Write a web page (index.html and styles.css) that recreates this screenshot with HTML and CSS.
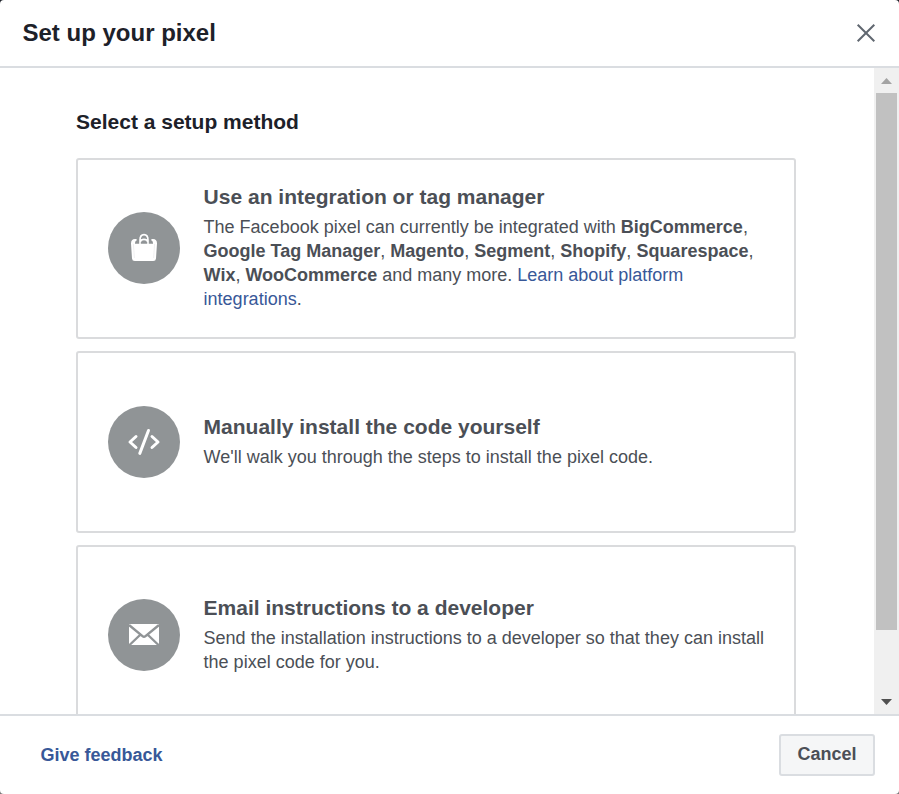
FILE: index.html
```
<!DOCTYPE html>
<html lang="en">
<head>
<meta charset="utf-8">
<title>Set up your pixel</title>
<link rel="stylesheet" href="styles.css">
</head>
<body>
<div class="dialog">
  <header class="header">
    <h1 class="title">Set up your pixel</h1>
    <button class="close" aria-label="Close"><svg width="20" height="20" viewBox="0 0 20 20"><path d="M1.7 1.7 18.3 18.3M18.3 1.7 1.7 18.3" fill="none" stroke="#606770" stroke-width="2"/></svg></button>
  </header>
  <div class="body">
    <main class="content">
      <h2 class="heading">Select a setup method</h2>
      <section class="card">
        <div class="icon"><svg width="72" height="72" viewBox="0 0 72 72"><path d="M23 31.5Q23 27 27 27H28.6V28.6Q26.9 29 26.9 31.8H31.2V28Q31.2 21.8 36 21.8T40.8 28V31.8H45.1Q45.1 29 43.4 28.6V27H45Q49 27 49 31.5L48 46.5Q47.8 49 45.2 49H26.8Q24.2 49 24 46.5Z" fill="#fff"/><path d="M32.8 27.2Q33.2 23.4 36 23.4T39.2 27.2Q36 25.6 32.8 27.2Z" fill="#909496"/><path d="M32.8 31.8V30.4Q33.4 28.2 36 28.2T39.2 30.4V31.8Z" fill="#909496"/><path d="M25.4 32 26.4 46M46.6 32 45.6 46" stroke="#e0e1e2" stroke-width=".5"/></svg></div>
        <div class="copy">
          <h3 class="name">Use an integration or tag manager</h3>
          <p class="text">The Facebook pixel can currently be integrated with <b>BigCommerce</b>,<br><b>Google Tag Manager</b>, <b>Magento</b>, <b>Segment</b>, <b>Shopify</b>, <b>Squarespace</b>,<br><b>Wix</b>, <b>WooCommerce</b> and many more. <a class="link">Learn about platform<br>integrations</a>.</p>
        </div>
      </section>
      <section class="card">
        <div class="icon"><svg width="72" height="72" viewBox="0 0 72 72" fill="none" stroke="#fff" stroke-width="3" stroke-linecap="round" stroke-linejoin="round"><path d="M28 30.5 22 36 28 41.5M44 30.5 50 36 44 41.5M40.5 24.5 31.8 47.4"/></svg></div>
        <div class="copy">
          <h3 class="name">Manually install the code yourself</h3>
          <p class="text">We'll walk you through the steps to install the pixel code.</p>
        </div>
      </section>
      <section class="card">
        <div class="icon"><svg width="72" height="72" viewBox="0 0 72 72"><path d="M21 25H51V46H21Z" fill="#fff"/><path d="M21 26 34.5 37.2Q36 38.5 37.5 37.2L51 26M21 46.5 32 36M51 46.5 40 36" stroke="#909496" stroke-width="2.4" fill="none"/></svg></div>
        <div class="copy">
          <h3 class="name">Email instructions to a developer</h3>
          <p class="text">Send the installation instructions to a developer so that they can install<br>the pixel code for you.</p>
        </div>
      </section>
    </main>
    <div class="scrollbar">
      <svg class="arrow" width="25" height="25"><path d="M7 16H18L12.5 10Z" fill="#a3a3a3"/></svg>
      <div class="thumb"></div>
      <svg class="arrow down" width="25" height="25"><path d="M7 10H18L12.5 16Z" fill="#505050"/></svg>
    </div>
  </div>
  <footer class="footer">
    <a class="feedback">Give feedback</a>
    <button class="cancel">Cancel</button>
  </footer>
</div>
</body>
</html>
```
FILE: styles.css
```
* { box-sizing: border-box; }
body { margin: 0; background: linear-gradient(#1d2129 50%, #777 50%); font-family: "Liberation Sans", Arial, sans-serif; color: #4b4f56; }
h1, h2, h3, p { margin: 0; }
.dialog { width: 899px; height: 794px; display: flex; flex-direction: column; overflow: hidden; border-radius: 4px; background: #fff; }
.header { height: 68px; flex: none; display: flex; align-items: center; justify-content: space-between; padding: 0 23px 0 22.5px; border-bottom: 2px solid #dadde1; }
.title { font-size: 24px; line-height: 28px; color: #1d2129; white-space: nowrap; }
.close { width: 20px; height: 20px; padding: 0; border: 0; background: none; }
.close svg { display: block; }
.body { height: 646px; flex: none; display: flex; overflow: hidden; }
.content { width: 874px; flex: none; padding: 39.6px 78px 0 76px; overflow: hidden; }
.heading { height: 50px; font-size: 21px; line-height: 28px; color: #1d2129; white-space: nowrap; }
.card { height: 181.6px; display: flex; align-items: center; margin-bottom: 12px; padding-left: 30px; border: 2px solid #dadbdd; border-radius: 3px; }
.icon { width: 72px; height: 72px; flex: none; margin-bottom: .6px; border-radius: 50%; background: #909496; }
.icon svg { display: block; }
.copy { margin-left: 23.6px; padding-bottom: 2.6px; white-space: nowrap; }
.name { font-size: 21px; line-height: 28px; height: 32px; }
.text { font-size: 18px; line-height: 24px; }
.link { color: #385898; }
.scrollbar { width: 25px; flex: none; display: flex; flex-direction: column; align-items: center; background: #f0f0f0; }
.arrow { display: block; flex: none; }
.thumb { width: 21px; height: 537px; background: #c1c1c1; }
.down { margin-top: auto; }
.footer { flex: 1; display: flex; align-items: center; justify-content: space-between; padding: 0 24px 0 40.5px; border-top: 2px solid #dadde1; }
.feedback { font-size: 18px; font-weight: bold; color: #385898; }
.cancel { width: 96px; height: 42px; padding: 0 0 2px; border: 2px solid #dadde1; border-radius: 3px; background: #f5f6f7; color: #4b4f56; font: bold 18px "Liberation Sans", Arial, sans-serif; }
```
